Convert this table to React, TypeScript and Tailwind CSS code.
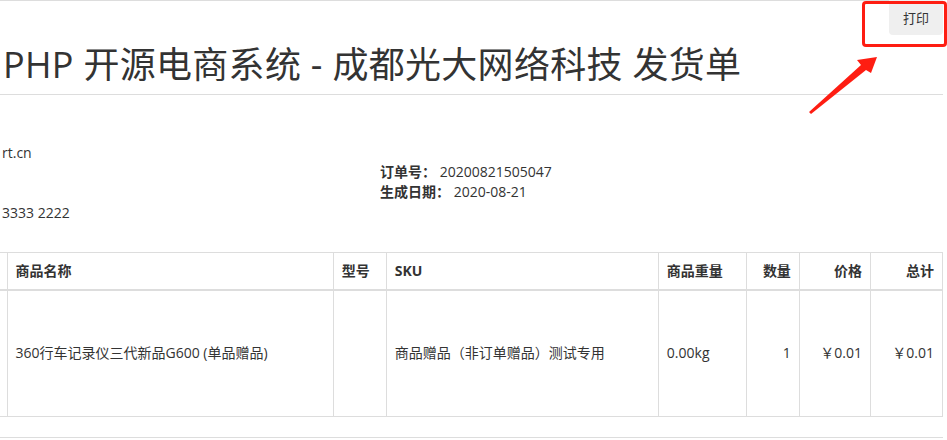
const font = {
  fontFamily: '"Open Sans", "Noto Sans CJK SC", sans-serif',
};

const columns = [
  { key: 'edge', label: '', width: 'w-[7px]', align: 'text-left' },
  { key: 'name', label: '商品名称', width: 'w-[326px]', align: 'text-left' },
  { key: 'model', label: '型号', width: 'w-[53px]', align: 'text-left' },
  { key: 'sku', label: 'SKU', width: 'w-[272px]', align: 'text-left' },
  { key: 'weight', label: '商品重量', width: 'w-[88px]', align: 'text-left' },
  { key: 'qty', label: '数量', width: 'w-[53px]', align: 'text-right' },
  { key: 'price', label: '价格', width: 'w-[71px]', align: 'text-right' },
  { key: 'total', label: '总计', width: 'w-[72px]', align: 'text-right' },
];

const item: Record<string, string> = {
  edge: '',
  name: '360行车记录仪三代新品G600 (单品赠品)',
  model: '',
  sku: '商品赠品（非订单赠品）测试专用',
  weight: '0.00kg',
  qty: '1',
  price: '￥0.01',
  total: '￥0.01',
};

export default function App() {
  return (
    <div
      className="relative w-[947px] h-[440px] overflow-hidden bg-white text-[#333] text-[14px] leading-[20px]"
      style={font}
    >
      <div className="w-[943px] border-t border-[#ddd]">
        {/* Title */}
        <h1 className="pt-[42px] pb-[7px] pl-[3px] text-[36px] leading-[44px] tracking-[0.3px] font-normal whitespace-nowrap border-b border-[#ddd]">
          PHP 开源电商系统 - 成都光大网络科技 发货单
        </h1>

        {/* Store + order info */}
        <div className="grid grid-cols-[380px_1fr] pt-[48px]">
          <div className="pl-[2px]">
            <div>rt.cn</div>
            <div className="h-[20px]"></div>
            <div className="h-[20px]"></div>
            <div>3333 2222</div>
          </div>
          <div className="pt-[19px]">
            <div>
              <span className="font-bold">订单号：</span> 20200821505047
            </div>
            <div>
              <span className="font-bold">生成日期：</span> 2020-08-21
            </div>
          </div>
        </div>

        {/* Goods table */}
        <table className="mt-[29px] w-[943px] table-fixed border-collapse">
          <colgroup>
            {columns.map((col) => (
              <col key={col.key} className={col.width} />
            ))}
          </colgroup>
          <thead>
            <tr>
              {columns.map((col, i) => (
                <th
                  key={col.key}
                  className={`${col.align} h-[37px] ${i === 0 ? 'p-0' : 'px-[8px] border-l'} font-bold border-t border-b-2 border-[#ddd] ${
                    i === columns.length - 1 ? 'border-r' : ''
                  }`}
                >
                  {col.label}
                </th>
              ))}
            </tr>
          </thead>
          <tbody>
            <tr>
              {columns.map((col, i) => (
                <td
                  key={col.key}
                  className={`${col.align} h-[127px] ${i === 0 ? 'p-0' : 'px-[8px] border-l'} align-middle whitespace-nowrap border-b border-[#ddd] ${
                    i === columns.length - 1 ? 'border-r' : ''
                  }`}
                >
                  {item[col.key]}
                </td>
              ))}
            </tr>
          </tbody>
        </table>

        <div className="mt-[20px] border-t border-[#ddd]"></div>
      </div>

      {/* Print button */}
      <button className="absolute left-[889px] top-0 w-[54px] h-[35px] bg-[#efefef] rounded-b-[4px] text-[13px] text-[#333]">
        打印
      </button>

      {/* Annotation */}
      <div className="absolute left-[862px] top-[1px] w-[85px] h-[46px] border-[3px] border-[#fe1d12] rounded-[4px]"></div>
      <svg className="absolute left-0 top-0" width="947" height="440" viewBox="0 0 947 440">
        <polygon
          points="809,112 861,65 857,60 877,57 871,73 866,70 811,114"
          fill="#fe1d12"
        />
      </svg>
    </div>
  );
}
